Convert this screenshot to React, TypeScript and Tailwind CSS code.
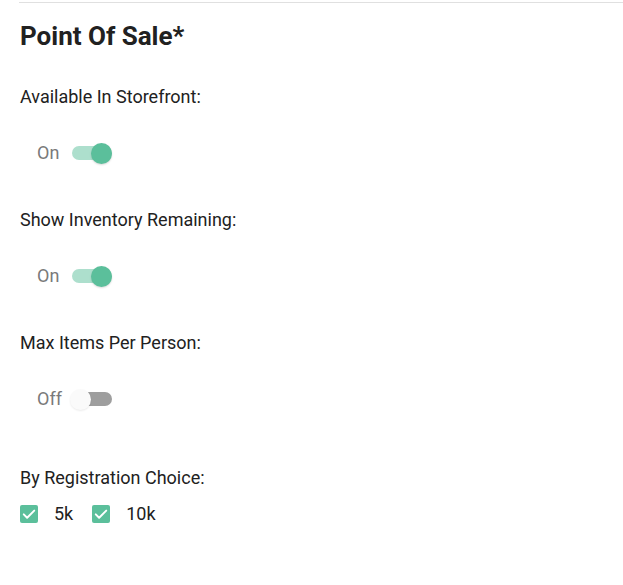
import React, { useState } from 'react'

const FONT = { fontFamily: 'Roboto, "Liberation Sans", sans-serif' }

function Toggle({ on, onChange }: { on: boolean; onChange: () => void }) {
  return (
    <div className="flex items-center h-[38px] pl-[17px]">
      <span className="w-[34px] text-[18px] leading-6 text-[#7a7a7a]">{on ? 'On' : 'Off'}</span>
      <button
        onClick={onChange}
        className="relative w-[41px] h-[21px] flex items-center"
      >
        <span
          className={
            on
              ? 'block w-[40px] h-[14px] ml-[1px] rounded-full bg-[#5bbf9b]/50'
              : 'block w-[40px] h-[14px] ml-[1px] rounded-full bg-[#9e9e9e]'
          }
        />
        <span
          className={
            on
              ? 'absolute top-0 left-[20px] w-[21px] h-[21px] rounded-full bg-[#5bbf9b] shadow-[0_1px_2px_rgba(0,0,0,0.15)]'
              : 'absolute top-0 left-[-1px] w-[21px] h-[21px] rounded-full bg-[#fafafa] shadow-[0_1px_2px_rgba(0,0,0,0.08)]'
          }
        />
      </button>
    </div>
  )
}

function Check({ label }: { label: string }) {
  return (
    <label className="flex items-center h-6">
      <span className="w-[18px] h-[18px] rounded-[2px] bg-[#5bbf9b] flex items-center justify-center">
        <svg width="18" height="18" viewBox="0 0 24 24" fill="none">
          <path d="M5 12.5l4.5 4.5L19 7.5" stroke="#fff" strokeWidth="2.6" strokeLinecap="round" strokeLinejoin="round" />
        </svg>
      </span>
      <span className="ml-4 text-[18px] leading-6 text-[#212121]">{label}</span>
    </label>
  )
}

export default function App() {
  const [store, setStore] = useState(true)
  const [inventory, setInventory] = useState(true)
  const [maxItems, setMaxItems] = useState(false)

  return (
    <div className="w-[623px] h-[585px] bg-white pl-5" style={FONT}>
      <div className="pt-[2px]">
        <div className="border-t border-[#e0e0e0] -ml-px" />
      </div>

      <h2 className="mt-[17px] text-[26px] leading-[32px] font-bold text-[#212121]">Point Of Sale*</h2>

      <p className="mt-[33px] text-[18px] leading-6 text-[#212121]">Available In Storefront:</p>
      <div className="mt-[25px]">
        <Toggle on={store} onChange={() => setStore(!store)} />
      </div>

      <p className="mt-[36px] text-[18px] leading-6 text-[#212121]">Show Inventory Remaining:</p>
      <div className="mt-[25px]">
        <Toggle on={inventory} onChange={() => setInventory(!inventory)} />
      </div>

      <p className="mt-[36px] text-[18px] leading-6 text-[#212121]">Max Items Per Person:</p>
      <div className="mt-[25px]">
        <Toggle on={maxItems} onChange={() => setMaxItems(!maxItems)} />
      </div>

      <p className="mt-[48px] text-[18px] leading-6 text-[#212121]">By Registration Choice:</p>
      <div className="mt-[12px] flex items-center gap-[19px]">
        <Check label="5k" />
        <Check label="10k" />
      </div>
    </div>
  )
}
